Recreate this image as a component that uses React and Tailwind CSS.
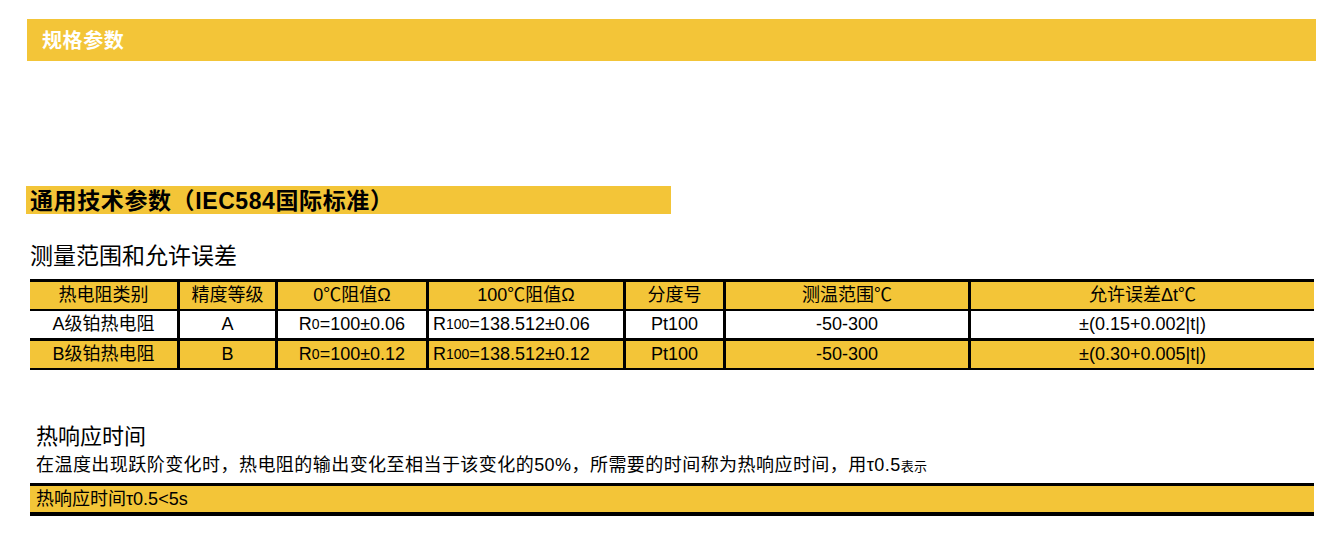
import React from "react";

const F = { fontFamily: '"Liberation Sans", "Noto Sans CJK SC", sans-serif' };

const cols = "grid grid-cols-[147px_95px_148px_194px_97px_242px_343px] gap-x-[3px] bg-black";

function Cell({ children, left, bg }) {
  return (
    <div
      className={`${bg} flex items-center ${left ? "justify-start pl-[4px]" : "justify-center"} whitespace-nowrap text-[18px] text-black`}
    >
      {children}
    </div>
  );
}

function Sub({ children }) {
  return <span className="text-[14px]">{children}</span>;
}

export default function App() {
  const Y = "bg-[#f3c538]";
  const W = "bg-white";
  const rows = [
    {
      bg: W,
      h: "h-[27px]",
      cells: ["A级铂热电阻", "A", <>R<Sub>0</Sub>=100±0.06</>, <>R<Sub>100</Sub>=138.512±0.06</>, "Pt100", "-50-300", "±(0.15+0.002|t|)"],
    },
    {
      bg: Y,
      h: "h-[26px]",
      cells: ["B级铂热电阻", "B", <>R<Sub>0</Sub>=100±0.12</>, <>R<Sub>100</Sub>=138.512±0.12</>, "Pt100", "-50-300", "±(0.30+0.005|t|)"],
    },
  ];
  const header = ["热电阻类别", "精度等级", "0℃阻值Ω", "100℃阻值Ω", "分度号", "测温范围℃", "允许误差Δt℃"];

  return (
    <div className="w-[1339px] h-[557px] bg-white overflow-hidden" style={F}>
      <div className="pt-[19px]">
        <div className={`ml-[27px] w-[1289px] h-[42px] ${Y} pl-[15px] text-[20px] tracking-[0.6px] font-bold leading-[44px] text-white`}>
          规格参数
        </div>

        <div className={`mt-[125px] ml-[26px] w-[645px] h-[28px] ${Y} pl-[4px] text-[23px] tracking-[0.6px] font-bold leading-[30px] text-black whitespace-nowrap`}>
          通用技术参数（IEC584国际标准）
        </div>

        <div className="mt-[27px] ml-[30px] h-[30px] text-[23px] leading-[30px] text-black">
          测量范围和允许误差
        </div>

        <div className="mt-[8px] ml-[30px] w-[1284px] bg-black py-[3px] flex flex-col gap-y-[3px]">
          <div className={`${cols} h-[26px]`}>
            {header.map((h, i) => (
              <Cell key={i} bg={Y}>{h}</Cell>
            ))}
          </div>
          {rows.map((r, ri) => (
            <div key={ri} className={`${cols} ${r.h}`}>
              {r.cells.map((c, i) => (
                <Cell key={i} bg={r.bg} left={i === 3}>{c}</Cell>
              ))}
            </div>
          ))}
        </div>

        <div className="mt-[52px] ml-[36px] h-[30px] text-[22px] leading-[30px] text-black">
          热响应时间
        </div>
        <div className="mt-[2px] ml-[36px] h-[22px] text-[18px] leading-[22px] tracking-[0.45px] text-black whitespace-nowrap">
          在温度出现跃阶变化时，热电阻的输出变化至相当于该变化的50%，所需要的时间称为热响应时间，用τ0.5<span className="text-[13px]">表示</span>
        </div>

        <div className={`mt-[7px] ml-[30px] w-[1284px] border-t-[3px] border-b-[4px] border-black ${Y} h-[33px] pl-[6px] text-[18px] leading-[26px] text-black`}>
          热响应时间τ0.5&lt;5s
        </div>
      </div>
    </div>
  );
}
